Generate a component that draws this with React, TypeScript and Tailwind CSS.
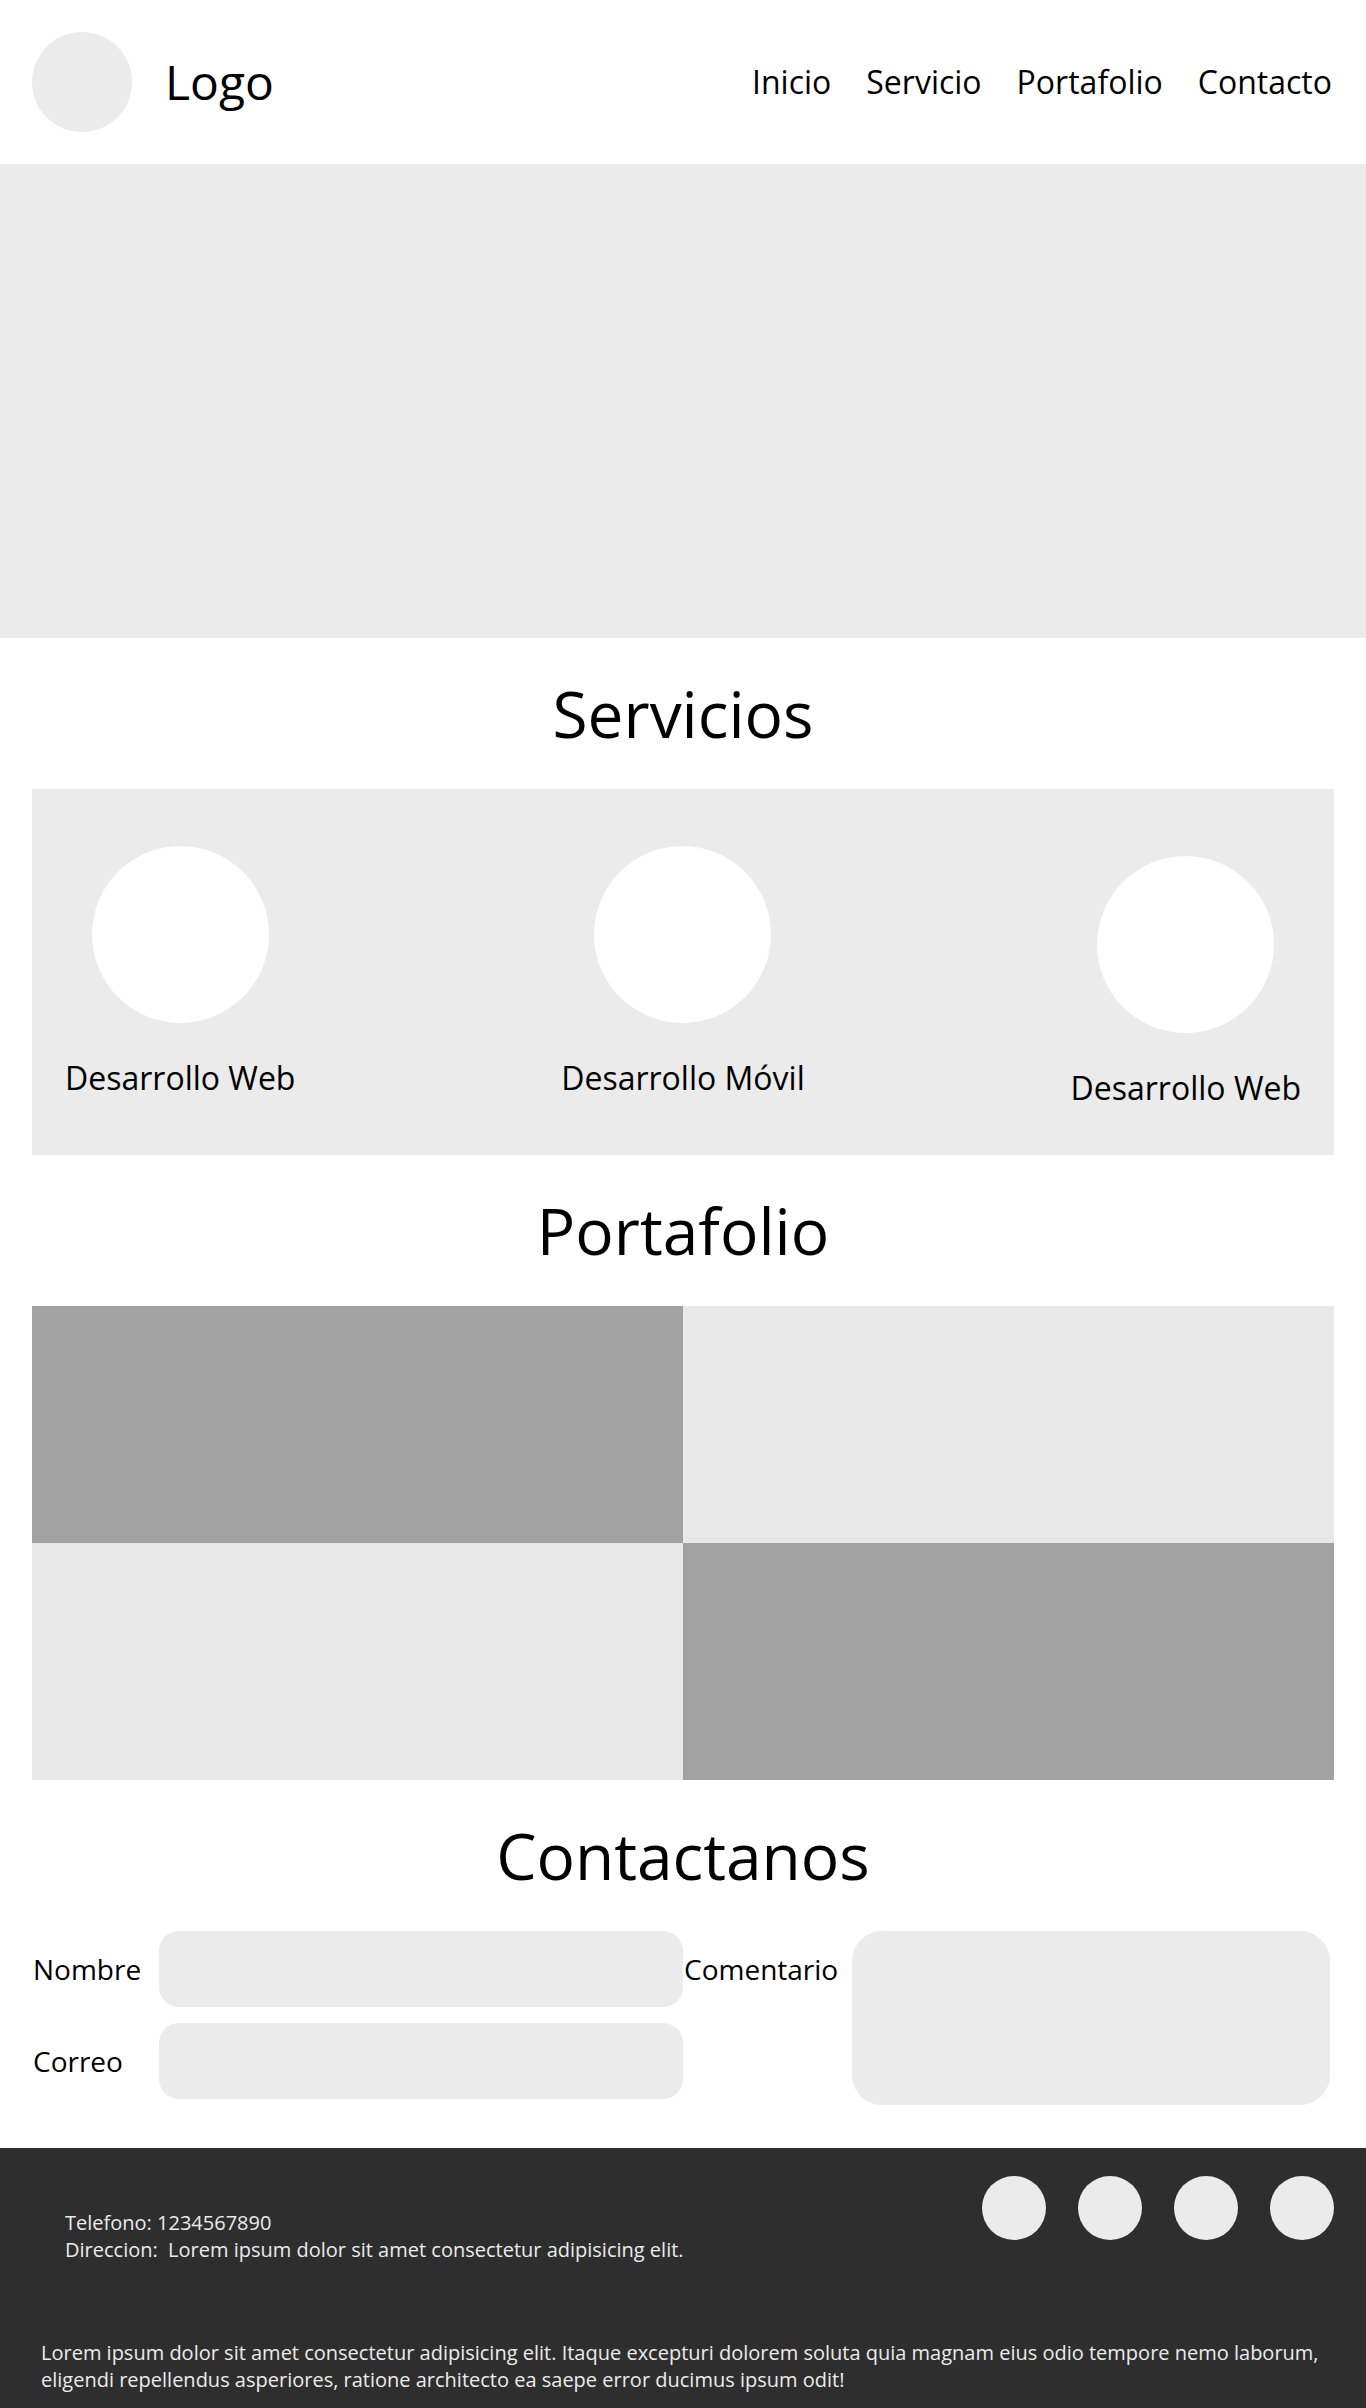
const links = ["Inicio", "Servicio", "Portafolio", "Contacto"];

function Service({ name, low = false }: { name: string; low?: boolean }) {
  return (
    <article className={low ? "flex flex-col items-center pt-[10px]" : "flex flex-col items-center"}>
      <div className="size-[177px] rounded-full bg-white" />
      <h3 className="mt-8 text-[32px] leading-[46px]">{name}</h3>
    </article>
  );
}

function Heading({ children }: { children: string }) {
  return <h2 className="py-8 text-center text-[64px] leading-[87px]">{children}</h2>;
}

export default function App() {
  return (
    <div className="bg-white font-['Open_Sans',sans-serif] text-black">
      <header className="flex h-[164px] items-center justify-between px-8">
        <div className="flex items-center gap-[33px]">
          <div className="size-[100px] rounded-full bg-[#ebebeb]" />
          <span className="text-5xl">Logo</span>
        </div>
        <nav className="flex gap-[35px] pr-[2px] text-[32px] leading-[44px]">
          {links.map((l) => (
            <a key={l} href={"#" + l.toLowerCase()}>{l}</a>
          ))}
        </nav>
      </header>
      <main>
        <section id="inicio" className="h-[474px] bg-[#ebebeb]" />
        <section id="servicio" className="px-8">
          <Heading>Servicios</Heading>
          <div className="flex min-h-[366px] items-start justify-between bg-[#ebebeb] px-[33px] pt-[57px]">
            <Service name="Desarrollo Web" />
            <Service name="Desarrollo Móvil" />
            <Service name="Desarrollo Web" low />
          </div>
        </section>
        <section id="portafolio" className="px-8">
          <Heading>Portafolio</Heading>
          <div className="grid grid-cols-2">
            <div className="h-[237px] bg-[#a2a2a2]" />
            <div className="h-[237px] bg-[#e8e8e8]" />
            <div className="h-[237px] bg-[#e8e8e8]" />
            <div className="h-[237px] bg-[#a2a2a2]" />
          </div>
        </section>
        <section id="contacto" className="px-8 pb-[43px]">
          <Heading>Contactanos</Heading>
          <form className="grid grid-cols-2 text-[28px]">
            <div className="flex flex-col gap-4">
              <div className="flex items-center">
                <label htmlFor="nombre" className="w-[127px] pl-px">Nombre</label>
                <input id="nombre" type="text" className="h-19 min-w-0 flex-1 rounded-[20px] bg-[#ebebeb] px-5" />
              </div>
              <div className="flex items-center">
                <label htmlFor="correo" className="w-[127px] pl-px">Correo</label>
                <input id="correo" type="email" className="h-19 min-w-0 flex-1 rounded-[20px] bg-[#ebebeb] px-5" />
              </div>
            </div>
            <div className="flex items-start pr-1">
              <label htmlFor="comentario" className="w-[169px] pl-px leading-[76px]">Comentario</label>
              <textarea id="comentario" className="h-[174px] min-w-0 flex-1 resize-none rounded-[30px] bg-[#ebebeb] p-5" />
            </div>
          </form>
        </section>
      </main>
      <footer className="bg-[#2e2e2e] text-xl leading-[27px] text-[#ebebeb]">
        <div className="flex items-start justify-between px-8 pt-7">
          <address className="whitespace-pre-wrap pt-[33px] pl-[33px] not-italic">
            <p>Telefono: 1234567890</p>
            <p>Direccion:  Lorem ipsum dolor sit amet consectetur adipisicing elit.</p>
          </address>
          <div className="flex gap-8">
            {[1, 2, 3, 4].map((n) => (
              <a key={n} href="#" aria-label={"Red social " + n} className="size-16 rounded-full bg-[#ebebeb]" />
            ))}
          </div>
        </div>
        <p className="px-[41px] pt-[76px] pb-4">
          Lorem ipsum dolor sit amet consectetur adipisicing elit. Itaque excepturi dolorem soluta quia magnam eius odio tempore nemo laborum, eligendi repellendus asperiores, ratione architecto ea saepe error ducimus ipsum odit!
        </p>
      </footer>
    </div>
  );
}
